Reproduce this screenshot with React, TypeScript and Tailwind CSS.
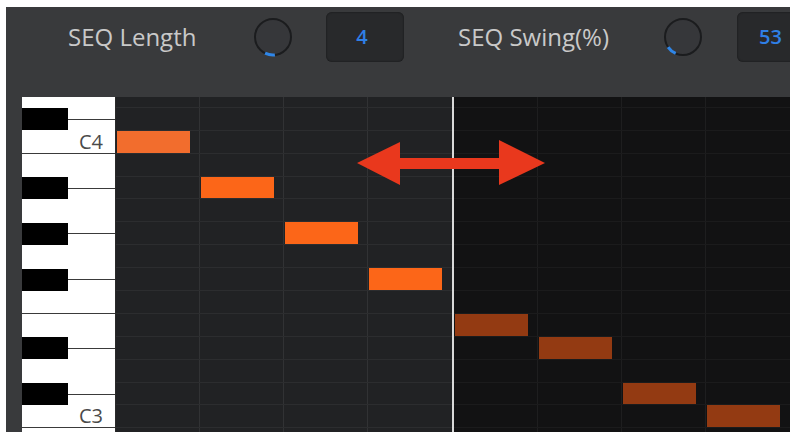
import { FC } from "react";

// piano roll rows, top (partly hidden) to bottom
const rows = [
  { name: "D4", black: false },
  { name: "C#4", black: true },
  { name: "C4", black: false, label: "C4", split: true },
  { name: "B3", black: false },
  { name: "A#3", black: true },
  { name: "A3", black: false },
  { name: "G#3", black: true },
  { name: "G3", black: false },
  { name: "F#3", black: true },
  { name: "F3", black: false, split: true },
  { name: "E3", black: false },
  { name: "D#3", black: true },
  { name: "D3", black: false },
  { name: "C#3", black: true },
  { name: "C3", black: false, label: "C3", split: true },
  { name: "B2", black: false },
];

// row index -> beat column (0..7)
const notes: Record<number, number> = {
  2: 0,
  4: 1,
  6: 2,
  8: 3,
  10: 4,
  11: 5,
  13: 6,
  14: 7,
};

const Knob: FC<{ angle: number }> = ({ angle }) => {
  // angle in degrees, 0 = straight down, positive = clockwise towards left
  const r = 18;
  const a1 = ((90 + angle - 16) * Math.PI) / 180;
  const a2 = ((90 + angle + 16) * Math.PI) / 180;
  const x1 = 20 + r * Math.cos(a1);
  const y1 = 20 + r * Math.sin(a1);
  const x2 = 20 + r * Math.cos(a2);
  const y2 = 20 + r * Math.sin(a2);
  return (
    <svg width="40" height="40" viewBox="0 0 40 40" className="shrink-0">
      <circle cx="20" cy="20" r="18" fill="#36373a" stroke="#1b1c1e" strokeWidth="2" />
      <path d={`M${x1} ${y1} A${r} ${r} 0 0 1 ${x2} ${y2}`} stroke="#2f86e8" strokeWidth="3" fill="none" />
    </svg>
  );
};

const GridHalf: FC<{ dark: boolean; offset: number }> = ({ dark, offset }) => (
  <div className={`w-[336px] h-full overflow-hidden ${dark ? "bg-[#121213]" : "bg-[#212224]"}`}>
    <div className="-mt-[12px] flex flex-col">
      {rows.map((row, i) => (
        <div
          key={row.name}
          className={`h-[22.9px] flex border-b ${dark ? "border-[#1b1b1c]" : "border-[#2c2d2f]"}`}
        >
          {[0, 1, 2, 3].map((c) => {
            const col = offset + c;
            const hasNote = notes[i] === col;
            return (
              <div
                key={c}
                className={`w-[84px] h-full pl-[1px] border-r ${
                  dark ? "border-[#1e1e1f]" : "border-[#313234]"
                } ${c === 3 ? "border-r-0" : ""}`}
              >
                {hasNote && (
                  <div
                    className={`w-[73px] h-full ${
                      dark ? "bg-[#933a12]" : i === 2 ? "bg-[#f26d2d]" : "bg-[#fc6618]"
                    }`}
                  />
                )}
              </div>
            );
          })}
        </div>
      ))}
    </div>
  </div>
);

export default function App() {
  return (
    <div
      className="w-[790px] h-[432px] bg-white overflow-hidden pt-[7px] pl-[6px]"
      style={{ fontFamily: '"Open Sans", "DejaVu Sans", sans-serif' }}
    >
      <div className="h-full bg-[#393a3c] flex flex-col">
        {/* header controls */}
        <div className="h-[90px] flex items-center pl-[62px] pb-[30px] shrink-0">
          <div className="w-[185px] shrink-0 text-[24px] leading-none text-[#c9c9c9]">SEQ Length</div>
          <Knob angle={10} />
          <div className="ml-[33px] w-[78px] h-[50px] shrink-0 rounded-md bg-[#28292b] shadow-[inset_0_0_2px_rgba(0,0,0,0.6)] flex items-center justify-center pr-[6px] text-[20px] font-semibold text-[#2f7fe6]">
            4
          </div>
          <div className="ml-[54px] w-[205px] shrink-0 text-[24px] leading-none text-[#c9c9c9]">SEQ Swing(%)</div>
          <Knob angle={40} />
          <div className="ml-[34px] w-[80px] h-[50px] shrink-0 rounded-md bg-[#28292b] shadow-[inset_0_0_2px_rgba(0,0,0,0.6)] flex items-center pl-[22px] text-[20px] font-semibold text-[#2f7fe6]">
            53
          </div>
        </div>

        {/* piano roll */}
        <div className="flex-1 flex pl-[16px] overflow-hidden">
          <div className="w-[94px] h-full bg-white overflow-hidden border-r border-[#2a2a2a] shrink-0">
            <div className="-mt-[12px] flex flex-col">
              {rows.map((row) => (
                <div
                  key={row.name}
                  className={`h-[22.9px] flex items-center ${row.split ? "border-b border-[#3a3a3a]" : ""}`}
                >
                  {row.black ? (
                    <>
                      <div className="w-[46px] h-[22px] bg-black" />
                      <div className="flex-1 h-px bg-[#3a3a3a]" />
                    </>
                  ) : (
                    <div className="flex-1 text-right pr-[12px] text-[20px] leading-none text-[#4a4a4a]">
                      {row.label}
                    </div>
                  )}
                </div>
              ))}
            </div>
          </div>

          <div className="relative flex h-full shrink-0">
            <GridHalf dark={false} offset={0} />
            <div className="w-[2px] h-full bg-[#d9d9d9]" />
            <GridHalf dark={true} offset={4} />

            {/* drag hint arrow */}
            <svg
              className="absolute left-[241px] top-[43px]"
              width="188"
              height="46"
              viewBox="0 0 188 46"
            >
              <polygon
                points="0,23 43,2 43,18 142,18 142,0 188,23 142,45 142,29 43,29 43,45"
                fill="#e9381d"
              />
            </svg>
          </div>
        </div>
      </div>
    </div>
  );
}
